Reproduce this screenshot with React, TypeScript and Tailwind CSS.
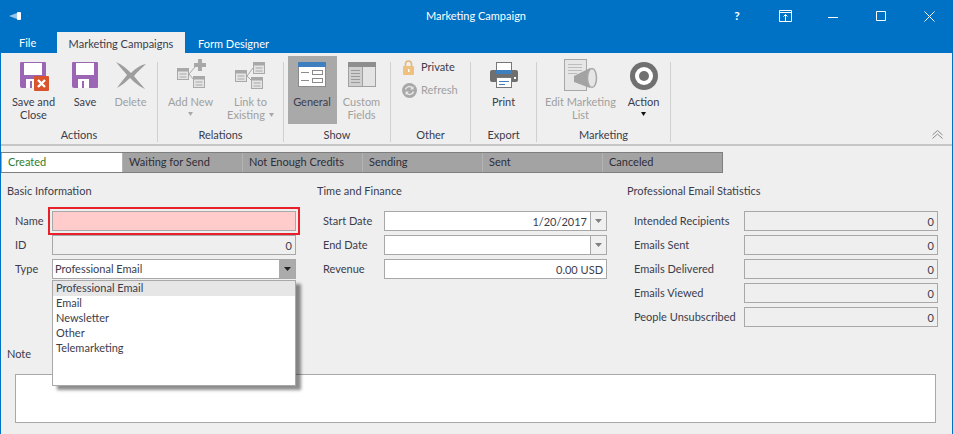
import React from "react";

const Disk = () => (
  <>
    <path d="M1 0h24a1 1 0 0 1 1 1v24a1 1 0 0 1-1 1H2a2 2 0 0 1-2-2V1a1 1 0 0 1 1-1z" fill="#9b67b5" />
    <rect x="4" y="1" width="18" height="12" fill="#fff" />
    <rect x="6" y="17" width="11" height="9" fill="#fff" />
    <rect x="10" y="19" width="2" height="7" fill="#9b67b5" />
  </>
);

const Save = () => (
  <svg width="26" height="26" viewBox="0 0 26 26" className="block">
    <Disk />
  </svg>
);

const SaveClose = () => (
  <svg width="30" height="30" viewBox="0 0 30 30" className="block ml-[3px]">
    <Disk />
    <rect x="14" y="14" width="15" height="15" rx="1" fill="#d9532c" />
    <path d="M18 18l7 7M25 18l-7 7" stroke="#fff" strokeWidth="2.400" />
  </svg>
);

const DeleteIcon = () => (
  <svg width="30" height="27" viewBox="0 0 30 27" className="block">
    <path d="M0 0C7 3 12 8 15 11 19 7 24 3 30 2 26 6 21 10 18 14 21 18 25 22 29 27 24 25 18 20 14 16 10 20 6 23 1 26 4 21 8 17 11 13 7 8 3 4 0 0z" fill="#9e9e9e" />
  </svg>
);

const Node = ({ x, y }: { x: number; y: number }) => (
  <g>
    <rect x={x} y={y} width="11" height="11" fill="#e4e4e4" stroke="#a8a8a8" />
    <rect x={x} y={y} width="11" height="3" fill="#a8a8a8" />
    <path d={`M${x + 2} ${y + 5.5}h7M${x + 2} ${y + 8.5}h7`} stroke="#a8a8a8" />
  </g>
);

const AddNew = () => (
  <svg width="32" height="31" viewBox="0 0 32 31" className="block -mt-[3px] ml-[4px]">
    <Node x={0.5} y={9.5} />
    <Node x={16.5} y={17.5} />
    <path d="M12 15l6-7M12 15l5 6" stroke="#a8a8a8" fill="none" />
    <path d="M21 0h4v4h4v4h-4v4h-4V8h-4V4h4z" fill="#a8a8a8" />
  </svg>
);

const LinkExisting = () => (
  <svg width="32" height="31" viewBox="0 0 32 31" className="block -mt-[1px]">
    <Node x={0.5} y={9.5} />
    <Node x={18.5} y={1.5} />
    <Node x={16.5} y={16.5} />
    <path d="M12 15l6-8M12 15l5 5" stroke="#a8a8a8" fill="none" />
  </svg>
);

const GeneralIcon = () => (
  <svg width="28" height="25" viewBox="0 0 28 25" className="block">
    <rect x="0.5" y="0.5" width="27" height="24" fill="#fff" stroke="#8b8b8b" />
    <rect x="0" y="0" width="28" height="5" fill="#3f7fbd" />
    <path d="M3 10.500h8M3 18.500h8" stroke="#8b8b8b" />
    <rect x="14.500" y="8.500" width="10" height="4" fill="#fff" stroke="#8b8b8b" />
    <rect x="14.500" y="16.500" width="10" height="4" fill="#fff" stroke="#8b8b8b" />
  </svg>
);

const CustomIcon = () => (
  <svg width="28" height="25" viewBox="0 0 28 25" className="block">
    <rect x="0.5" y="0.5" width="27" height="24" fill="#e4e4e4" stroke="#a0a0a0" />
    <rect x="0" y="0" width="28" height="5" fill="#8e8e8e" />
    <rect x="1" y="5" width="13" height="19" fill="#cfcfcf" />
    <path d="M3 8.500h9M3 11.500h9M3 14.500h9M3 17.500h9M3 20.500h9" stroke="#9a9a9a" />
    <path d="M14.500 5v19" stroke="#a0a0a0" />
  </svg>
);

const PrintIcon = () => (
  <svg width="28" height="26" viewBox="0 0 28 26" className="block">
    <rect x="6.500" y="0.500" width="15" height="10" fill="#fff" stroke="#777" />
    <rect x="0" y="8" width="28" height="12" rx="2" fill="#6f6f6f" />
    <rect x="6" y="8" width="16" height="4" fill="#3f7fbd" />
    <rect x="6.500" y="15.500" width="15" height="10" fill="#fff" stroke="#777" />
    <path d="M9 19.500h10M9 22.500h6" stroke="#3f7fbd" />
    <rect x="24" y="15" width="2" height="2" fill="#fff" />
  </svg>
);

const MarketingIcon = () => (
  <svg width="34" height="32" viewBox="0 0 34 32" className="block">
    <rect x="0.5" y="0.5" width="22" height="31" fill="#e6e6e6" stroke="#a8a8a8" />
    <path d="M4 5.500h14M4 8.500h14M4 11.500h14M4 14.500h9" stroke="#bdbdbd" />
    <path d="M10 17L26 9v20L10 23z" fill="#a3a3a3" />
    <ellipse cx="28" cy="19" rx="4.500" ry="9.500" fill="#e6e6e6" stroke="#a8a8a8" strokeWidth="1.500" />
  </svg>
);

const Target = () => (
  <svg width="28" height="28" viewBox="0 0 28 28" className="block">
    <circle cx="14" cy="14" r="14" fill="#707070" />
    <circle cx="14" cy="14" r="9" fill="#fff" />
    <circle cx="14" cy="14" r="5" fill="#707070" />
  </svg>
);

const Arrow = ({ color, w = 7 }: { color: string; w?: number }) => (
  <svg width={w} height="4" viewBox="0 0 7 4" preserveAspectRatio="none" className="block">
    <path d="M0 0h7L3.500 4z" fill={color} />
  </svg>
);

type BtnProps = {
  w: string;
  icon: React.ReactNode;
  lines: string[];
  off?: boolean;
  arrow?: "below" | "inline";
  active?: boolean;
};

const RibbonBtn = ({ w, icon, lines, off, arrow, active }: BtnProps) => (
  <div
    className={`${w} h-[68px] flex flex-col items-center ${active ? "bg-[#a9a9a9]" : ""} ${off ? "text-[#a0a0a0]" : "text-[#3c3c4c]"}`}
  >
    <div className="h-[39px] pt-[6px] flex items-start justify-center">{icon}</div>
    <div className="leading-[13px] text-center whitespace-nowrap">
      {lines.map((l, i) => (
        <div key={l} className="flex items-center justify-center gap-[4px]">
          {l}
          {arrow === "inline" && i === lines.length - 1 ? <Arrow color="#a8a8a8" w={5} /> : null}
        </div>
      ))}
      {arrow === "below" ? (
        <div className="flex justify-center pt-[4px]">
          <Arrow color={off ? "#a8a8a8" : "#111"} w={5} />
        </div>
      ) : null}
    </div>
  </div>
);

const Group = ({ w, label, children }: { w: string; label: string; children: React.ReactNode }) => (
  <>
    <div className={`${w} shrink-0 flex flex-col`}>
      <div className="h-[73px] flex justify-center">{children}</div>
      <div className="h-[18px] leading-[18px] text-center text-[#3c3c4c]">{label}</div>
    </div>
    <div className="w-[1px] h-[80px] mt-[6px] shrink-0 bg-[#d0d0d0]" />
  </>
);

const Row = ({ label, lw, children }: { label: string; lw: string; children: React.ReactNode }) => (
  <div className="flex items-center h-[24px]">
    <div className={`${lw} shrink-0 text-[#3c3c4c] whitespace-nowrap`}>{label}</div>
    {children}
  </div>
);

const box = "h-[20px] border border-[#a8a8a8] flex items-center justify-end leading-none text-[#3c3c4c]";

const ReadBox = ({ w, value }: { w: string; value: string }) => (
  <div className={`${box} ${w} pr-[3px]`}>{value}</div>
);

const DateBox = ({ value }: { value: string }) => (
  <div className={`${box} w-[223px] bg-white`}>
    <div className="flex-1 text-right pr-[3px]">{value}</div>
    <div className="w-[16px] h-full border-l border-[#a8a8a8] bg-[#f0f0f0] flex items-center justify-center">
      <Arrow color="#808080" />
    </div>
  </div>
);

const tabs = ["Waiting for Send", "Not Enough Credits", "Sending", "Sent", "Canceled"];

export default function App() {
  return (
    <div
      className="w-[953px] h-[434px] overflow-hidden bg-[#efefef] border-x border-[#0072c6] text-[11px] text-[#3c3c4c] relative"
      style={{ fontFamily: 'Lato, "Liberation Sans", sans-serif' }}
    >
      <header className="h-[53px] bg-[#0072c6] -mx-[1px] text-white">
        <div className="h-[32px] flex items-center relative">
          <div className="pl-[9px] w-[420px]">
            <svg width="13" height="8" viewBox="0 0 13 8" className="block">
              <path d="M0 4l8-3v6z" fill="#9cc4e4" />
              <rect x="8" y="0" width="4" height="8" rx="1" fill="#fff" />
            </svg>
          </div>
          <div className="w-[112px] text-center whitespace-nowrap">Marketing Campaign</div>
          <div className="ml-auto flex items-center">
            <div className="w-[48px] text-center font-bold text-[12px]">?</div>
            <div className="w-[48px] flex justify-center">
              <svg width="13" height="12" viewBox="0 0 13 12" fill="none" stroke="#fff">
                <path d="M.5.500h12v11H.5zM.5 2.500h12M6.500 11V4.500M4.500 6.500l2-2 2 2" />
              </svg>
            </div>
            <div className="w-[48px] flex justify-center">
              <svg width="10" height="10" viewBox="0 0 10 10" stroke="#fff"><path d="M0 6.500h10" /></svg>
            </div>
            <div className="w-[48px] flex justify-center">
              <svg width="10" height="10" viewBox="0 0 10 10" fill="none" stroke="#fff"><path d="M.5.500h9v9h-9z" /></svg>
            </div>
            <div className="w-[48px] flex justify-center">
              <svg width="11" height="11" viewBox="0 0 11 11" stroke="#fff"><path d="M.5.500l10 10M10.500.500l-10 10" /></svg>
            </div>
          </div>
        </div>
        <nav className="h-[21px] flex">
          <div className="w-[57px] pl-[19px] leading-[21px]">File</div>
          <div className="w-[128px] bg-[#efefef] text-[#3c3c4c] text-center leading-[24px] whitespace-nowrap">Marketing Campaigns</div>
          <div className="pl-[13px] leading-[24px]">Form Designer</div>
        </nav>
      </header>

      <section className="h-[93px] flex border-b-2 border-[#c6c6c6] pt-[3px] relative">
        <Group w="w-[156px]" label="Actions">
          <RibbonBtn w="w-[65px]" icon={<SaveClose />} lines={["Save and", "Close"]} />
          <RibbonBtn w="w-[38px]" icon={<Save />} lines={["Save"]} />
          <RibbonBtn w="w-[53px]" icon={<DeleteIcon />} lines={["Delete"]} off />
        </Group>
        <Group w="w-[125px]" label="Relations">
          <RibbonBtn w="w-[60px]" icon={<AddNew />} lines={["Add New"]} arrow="below" off />
          <RibbonBtn w="w-[60px]" icon={<LinkExisting />} lines={["Link to", "Existing"]} arrow="inline" off />
        </Group>
        <Group w="w-[106px]" label="Show">
          <RibbonBtn w="w-[49px]" icon={<GeneralIcon />} lines={["General"]} active />
          <RibbonBtn w="w-[50px]" icon={<CustomIcon />} lines={["Custom", "Fields"]} off />
        </Group>
        <Group w="w-[79px]" label="Other">
          <div className="w-full pl-[12px] pt-[4px] flex flex-col gap-[8px]">
            <div className="flex items-center gap-[7px] h-[15px]">
              <svg width="11" height="15" viewBox="0 0 11 15" className="shrink-0">
                <path d="M2.500 7V4a3 3 0 0 1 6 0v3" fill="none" stroke="#e0b878" strokeWidth="1.600" />
                <rect x="0" y="6" width="11" height="9" rx="1" fill="#eec27e" />
                <rect x="5" y="9" width="1.500" height="3" fill="#fff" />
              </svg>
              Private
            </div>
            <div className="flex items-center gap-[7px] h-[15px] text-[#a0a0a0]">
              <svg width="15" height="15" viewBox="0 0 15 15" className="shrink-0 -ml-[1px] -mr-[3px]">
                <circle cx="7.500" cy="7.500" r="7.500" fill="#a8a8a8" />
                <path d="M3.500 6.500a4 4 0 0 1 7-1.500M11.500 8.500a4 4 0 0 1-7 1.500" fill="none" stroke="#e8e8e8" strokeWidth="1.400" />
                <path d="M11.500 3v3.500H8M3.500 12V8.500H7" fill="#e8e8e8" />
              </svg>
              Refresh
            </div>
          </div>
        </Group>
        <Group w="w-[65px]" label="Export">
          <RibbonBtn w="w-[60px]" icon={<PrintIcon />} lines={["Print"]} />
        </Group>
        <Group w="w-[133px]" label="Marketing">
          <RibbonBtn w="w-[80px]" icon={<div className="-mt-[3px]"><MarketingIcon /></div>} lines={["Edit Marketing", "List"]} off />
          <RibbonBtn w="w-[46px]" icon={<Target />} lines={["Action"]} arrow="below" />
        </Group>
        <div className="absolute right-[9px] bottom-[5px]">
          <svg width="11" height="9" viewBox="0 0 11 9" fill="none" stroke="#8a8a8a">
            <path d="M.500 5L5.500.500 10.500 5M.500 8.500L5.500 4 10.500 8.500" />
          </svg>
        </div>
      </section>

      <div className="pt-[6px] flex">
        <div className="flex h-[21px] border-y border-[#7f7f7f] border-r">
          <div className="w-[121px] bg-white text-[#2f7d32] pl-[6px] leading-[18px] border-l border-[#a8a8a8]">Created</div>
          {tabs.map((t) => (
            <div key={t} className="w-[120px] bg-[#a3a3a3] border-l border-[#b4b4b4] text-[#2e2e3a] pl-[6px] leading-[18px] whitespace-nowrap">
              {t}
            </div>
          ))}
        </div>
      </div>

      <main className="flex pt-[9px] relative">
        <div className="w-[316px] shrink-0 pl-[6px]">
          <div className="h-[18px] leading-[18px] mb-[9px]">Basic Information</div>
          <div className="pl-[8px]">
            <Row label="Name" lw="w-[37px]">
              <div className="-m-[4px] border-2 border-[#e8202a] p-[2px]">
                <div className="w-[244px] h-[20px] bg-[#ffcccb] border border-[#a8a8a8]" />
              </div>
            </Row>
            <Row label="ID" lw="w-[37px]">
              <ReadBox w="w-[244px]" value="0" />
            </Row>
            <Row label="Type" lw="w-[37px]">
              <div className={`${box} w-[244px] bg-white`}>
                <div className="flex-1 pl-[2px] pb-[2px]">Professional Email</div>
                <div className="w-[16px] h-full bg-[#ababab] flex items-center justify-center">
                  <Arrow color="#222" />
                </div>
              </div>
            </Row>
          </div>
          <div className="h-[24px] mt-[61px] leading-[24px]">Note</div>
        </div>

        <div className="w-[310px] shrink-0">
          <div className="h-[18px] leading-[18px] mb-[9px]">Time and Finance</div>
          <div className="pl-[6px]">
            <Row label="Start Date" lw="w-[61px]">
              <DateBox value="1/20/2017" />
            </Row>
            <Row label="End Date" lw="w-[61px]">
              <DateBox value="" />
            </Row>
            <Row label="Revenue" lw="w-[61px]">
              <ReadBox w="w-[223px] bg-white" value="0.00 USD" />
            </Row>
          </div>
        </div>

        <div className="flex-1">
          <div className="h-[18px] leading-[18px] mb-[9px]">Professional Email Statistics</div>
          <div className="pl-[7px]">
            {["Intended Recipients", "Emails Sent", "Emails Delivered", "Emails Viewed", "People Unsubscribed"].map((l) => (
              <Row key={l} label={l} lw="w-[110px]">
                <ReadBox w="w-[194px]" value="0" />
              </Row>
            ))}
          </div>
        </div>

        <div className="absolute left-[51px] top-[107px] w-[244px] h-[106px] z-10 bg-white border border-[#a8a8a8] shadow-[5px_4px_3px_rgba(0,0,0,0.45)]">
          <div className="h-[15px] bg-[#e6e6e6] pl-[3px] leading-[13px]">Professional Email</div>
          {["Email", "Newsletter", "Other", "Telemarketing"].map((o) => (
            <div key={o} className="h-[15px] pl-[3px] leading-[13px]">{o}</div>
          ))}
        </div>
      </main>

      <div className="pl-[14px] pt-[8px]">
        <div className="w-[921px] h-[49px] bg-white border border-[#a8a8a8]" />
      </div>
    </div>
  );
}
